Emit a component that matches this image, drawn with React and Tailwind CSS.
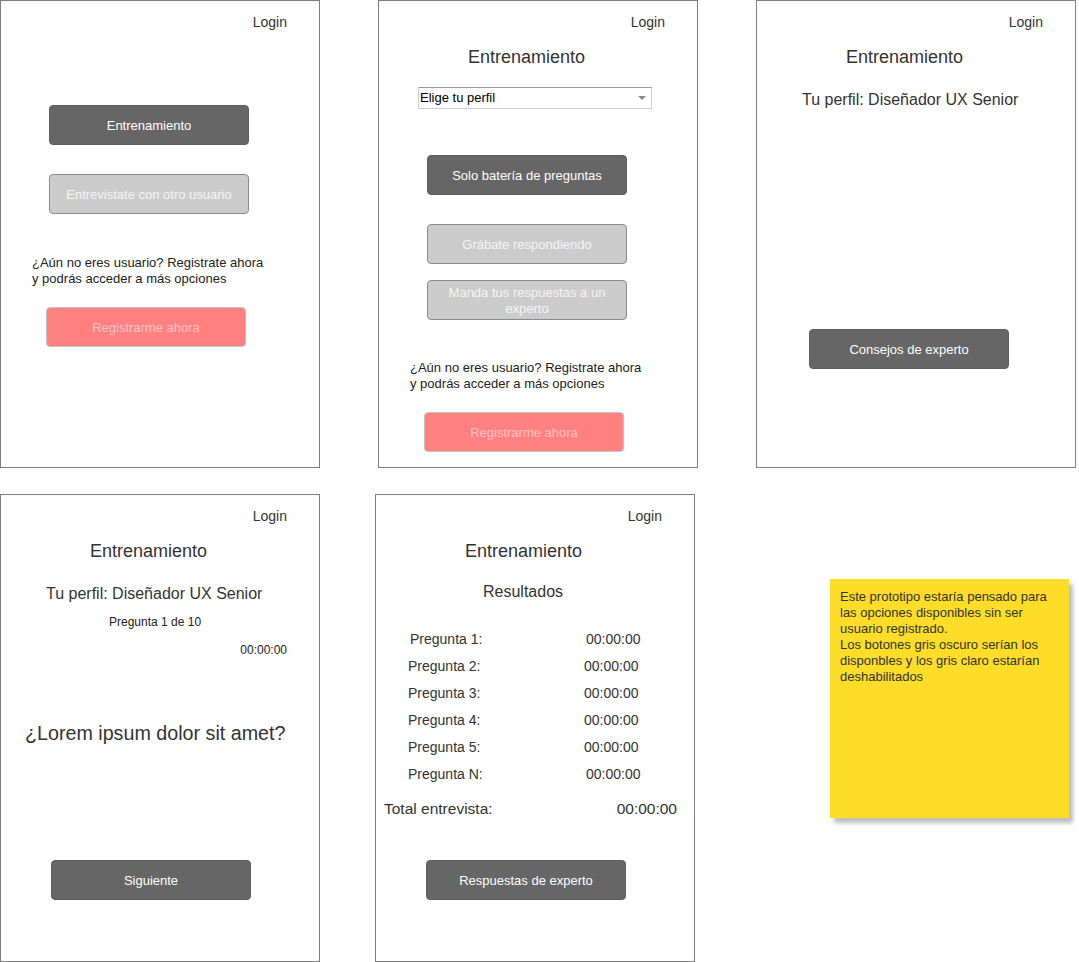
import React from "react";

const font = { fontFamily: '"Liberation Sans", Arial, sans-serif' };

function Panel({ children }) {
  return (
    <div className="flex h-[468px] w-[320px] shrink-0 flex-col border border-[#7f7f7f] bg-white text-[#333]">
      {children}
    </div>
  );
}

function Login() {
  return (
    <div className="mt-[13px] pr-[32px] text-right text-[14px] leading-[16px]">Login</div>
  );
}

function Title() {
  return (
    <div className="ml-[89px] mt-[16px] text-[18px] leading-[22px]">Entrenamiento</div>
  );
}

function DarkBtn({ className, children }) {
  return (
    <div
      className={
        "flex h-[40px] w-[200px] items-center justify-center rounded-[4px] border border-[#5e5e5e] bg-[#666666] pt-[2px] text-center text-[13px] leading-[16px] text-white " +
        className
      }
    >
      {children}
    </div>
  );
}

function LightBtn({ className, children }) {
  return (
    <div
      className={
        "flex h-[40px] w-[200px] items-center justify-center rounded-[4px] border border-[#8c8c8c] bg-[#cccccc] px-[14px] pt-[2px] text-center text-[13px] leading-[16px] text-[#f4f4f4] " +
        className
      }
    >
      {children}
    </div>
  );
}

function RegisterBtn({ className }) {
  return (
    <div
      className={
        "flex h-[40px] w-[200px] items-center justify-center rounded-[4px] border border-[#c4c4c4] bg-[#ff8080] pt-[2px] text-[13px] leading-[16px] text-[#ffc2c2] " +
        className
      }
    >
      Registrarme ahora
    </div>
  );
}

function Para({ className }) {
  return (
    <div className={"text-[13px] leading-[16px] text-[#222] " + className}>
      ¿Aún no eres usuario? Registrate ahora
      <br />y podrás acceder a más opciones
    </div>
  );
}

const rows = [
  { label: "Pregunta 1:", lo: "ml-[34px]", vo: "ml-[0px]" },
  { label: "Pregunta 2:", lo: "ml-[32px]", vo: "ml-[0px]" },
  { label: "Pregunta 3:", lo: "ml-[32px]", vo: "ml-[0px]" },
  { label: "Pregunta 4:", lo: "ml-[32px]", vo: "ml-[0px]" },
  { label: "Pregunta 5:", lo: "ml-[32px]", vo: "ml-[0px]" },
  { label: "Pregunta N:", lo: "ml-[32px]", vo: "ml-[2px]" },
];

export default function App() {
  return (
    <div className="h-[962px] w-[1079px] overflow-hidden bg-white" style={font}>
      <div className="flex gap-[58px]">
        {/* Panel 1 */}
        <Panel>
          <Login />
          <DarkBtn className="ml-[48px] mt-[75px]">Entrenamiento</DarkBtn>
          <LightBtn className="ml-[48px] mt-[29px]">Entrevistate con otro usuario</LightBtn>
          <Para className="ml-[31px] mt-[41px]" />
          <RegisterBtn className="ml-[45px] mt-[20px]" />
        </Panel>

        {/* Panel 2 */}
        <Panel>
          <Login />
          <Title />
          <div className="ml-[39px] mt-[19px] flex h-[22px] w-[234px] items-center justify-between border border-[#cfcfcf] border-t-[#9a9a9a] bg-white pl-[1px] pr-[4px]">
            <span className="text-[13px] leading-[16px] text-black">Elige tu perfil</span>
            <svg width="10" height="6" viewBox="0 0 10 6">
              <polygon points="1,1 9,1 5,5" fill="#8a8a8a" />
            </svg>
          </div>
          <DarkBtn className="ml-[48px] mt-[46px]">Solo batería de preguntas</DarkBtn>
          <LightBtn className="ml-[48px] mt-[29px]">Grábate respondiendo</LightBtn>
          <LightBtn className="ml-[48px] mt-[16px]">Manda tus respuestas a un experto</LightBtn>
          <Para className="ml-[31px] mt-[40px]" />
          <RegisterBtn className="ml-[45px] mt-[20px]" />
        </Panel>

        {/* Panel 3 */}
        <Panel>
          <Login />
          <Title />
          <div className="ml-[45px] mt-[22px] text-[16px] leading-[20px]">Tu perfil: Diseñador UX Senior</div>
          <DarkBtn className="ml-[52px] mt-[219px]">Consejos de experto</DarkBtn>
        </Panel>
      </div>

      <div className="mt-[26px] flex items-start">
        {/* Panel 4 */}
        <Panel>
          <Login />
          <Title />
          <div className="ml-[45px] mt-[22px] text-[16px] leading-[20px]">Tu perfil: Diseñador UX Senior</div>
          <div className="ml-[108px] mt-[11px] text-[12px] leading-[14px] text-[#222]">Pregunta 1 de 10</div>
          <div className="mt-[14px] pr-[32px] text-right text-[12px] leading-[14px] text-[#222]">00:00:00</div>
          <div className="ml-[24px] mt-[64px] text-[19.7px] leading-[24px]">¿Lorem ipsum dolor sit amet?</div>
          <DarkBtn className="ml-[50px] mt-[115px]">Siguiente</DarkBtn>
        </Panel>

        {/* Panel 5 */}
        <div className="ml-[55px]">
          <Panel>
            <Login />
            <Title />
            <div className="ml-[107px] mt-[20px] text-[16px] leading-[20px]">Resultados</div>
            <div className="mt-[24px] flex flex-col">
              {rows.map((r) => (
                <div key={r.label} className="flex h-[27px] items-center text-[14px] leading-[27px]">
                  <div className={"w-[176px] shrink-0 " + r.lo}>{r.label}</div>
                  <div className={r.vo}>00:00:00</div>
                </div>
              ))}
            </div>
            <div className="ml-[8px] mt-[11px] flex justify-between pr-[17px] text-[15.5px] leading-[20px]">
              <span>Total entrevista:</span>
              <span>00:00:00</span>
            </div>
            <DarkBtn className="ml-[50px] mt-[41px]">Respuestas de experto</DarkBtn>
          </Panel>
        </div>

        {/* Sticky note */}
        <div className="ml-[135px] mt-[85px] h-[239px] w-[239px] shrink-0 bg-[#fddd27] pl-[10px] pt-[10px] text-[13px] leading-[16px] text-[#333] shadow-[4px_5px_4px_rgba(0,0,0,0.25)]">
          <div className="whitespace-nowrap">
            Este prototipo estaría pensado para
            <br />
            las opciones disponibles sin ser
            <br />
            usuario registrado.
            <br />
            Los botones gris oscuro serían los
            <br />
            disponbles y los gris claro estarían
            <br />
            deshabilitados
          </div>
        </div>
      </div>
    </div>
  );
}
